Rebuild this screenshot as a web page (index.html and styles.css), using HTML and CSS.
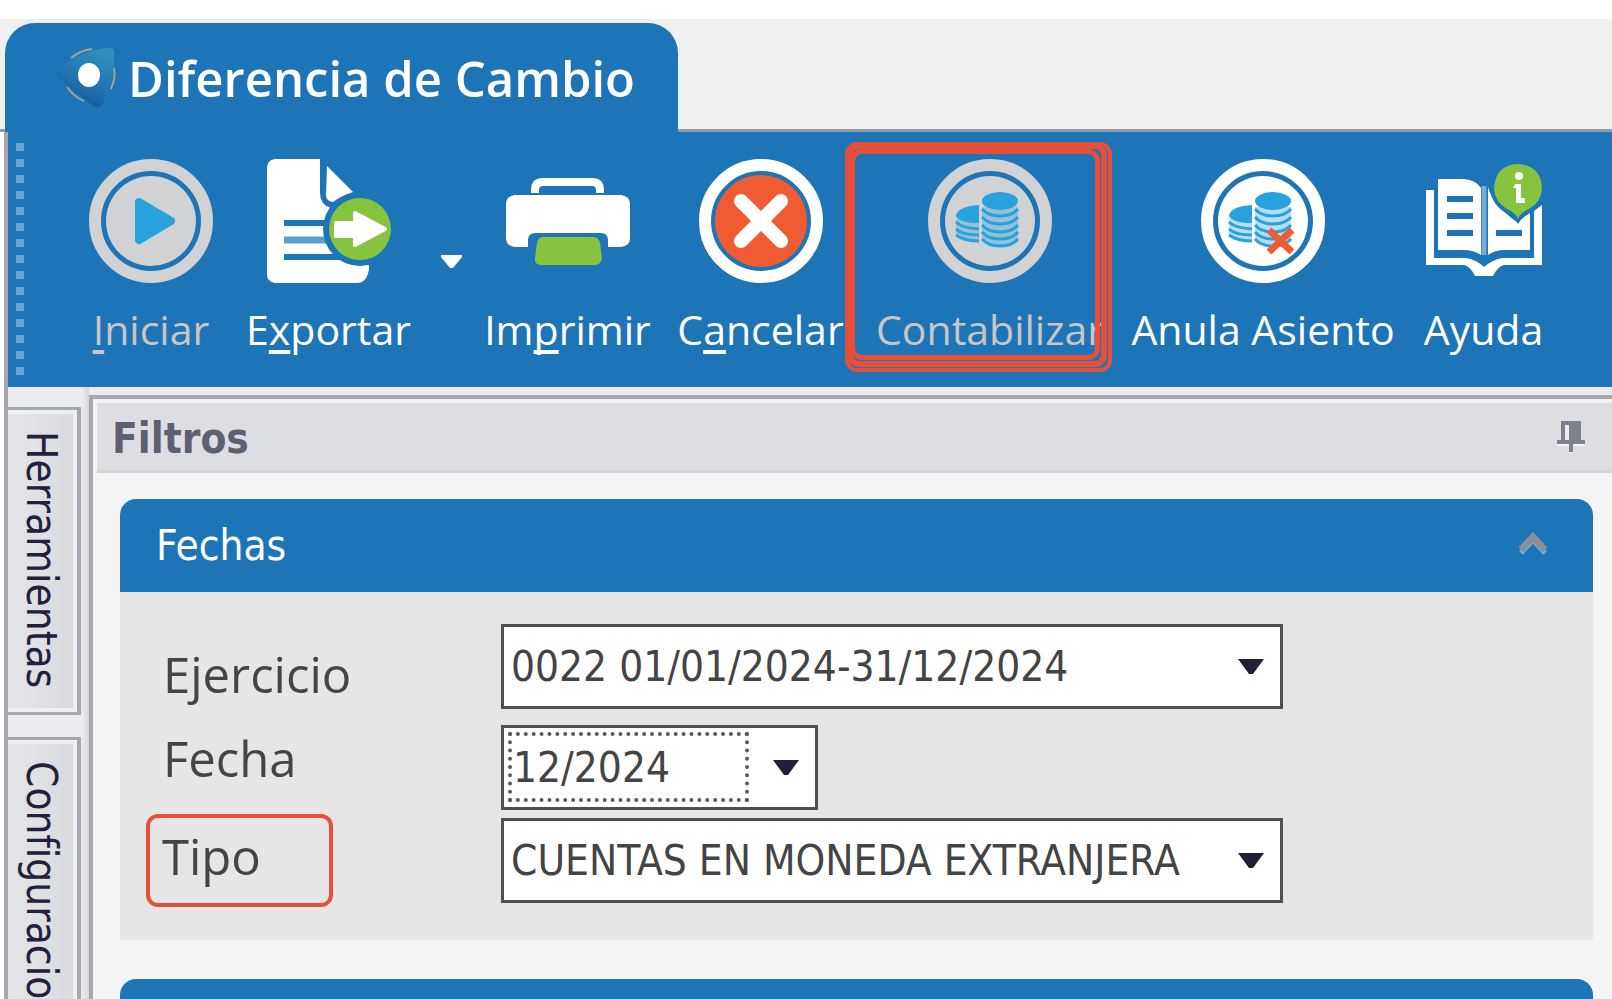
FILE: index.html
```html
<!DOCTYPE html>
<html lang="es">
<head>
<meta charset="utf-8">
<title>Diferencia de Cambio</title>
<link rel="stylesheet" href="styles.css">
</head>
<body>
<div class="window">
  <header class="tabstrip">
    <h1 class="doc-tab">
      <svg class="logo" viewBox="0 0 62 62" aria-hidden="true">
        <defs><linearGradient id="lg" x1="0.8" y1="0" x2="0.4" y2="1"><stop offset="0" stop-color="#3193bd"/><stop offset="0.5" stop-color="#2479b4"/><stop offset="1" stop-color="#125b9a"/></linearGradient></defs>
        <path d="M3 22Q-1 27 3 32L37 59Q44 63 47 56Q60 30 58 5Q57 0 50 1Q22 5 3 22Z" fill="url(#lg)"/>
        <path d="M15 11Q25 3 36 2M11 40Q18 50 28 54M58 21Q60 30 55 42" fill="none" stroke="#a5a19a" stroke-width="2"/>
        <ellipse cx="33" cy="28" rx="11" ry="12" fill="#fff"/>
      </svg>
      <span>Diferencia de Cambio</span>
    </h1>
  </header>

  <div class="frame">
    <nav class="toolbar" aria-label="Acciones">
      <span class="grip"></span>
      <button class="tool w-iniciar" disabled>
        <svg class="icon" viewBox="0 0 124 124" aria-hidden="true">
          <circle cx="62" cy="62" r="56" fill="none" stroke="#d1d2d4" stroke-width="12"/>
          <circle cx="62" cy="62" r="45" fill="#d1d2d4"/>
          <path d="M50 43L82 62L50 81Z" fill="#27a2dc" stroke="#27a2dc" stroke-width="8" stroke-linejoin="round"/>
        </svg>
        <span><u>I</u>niciar</span>
      </button>
      <button class="tool w-exportar">
        <svg class="icon" viewBox="0 0 124 124" aria-hidden="true">
          <path d="M8 0H53V34Q53 46 64 49L102 56V110Q100 124 90 124H8Q0 123 0 115V9Q0 1 8 0Z" fill="#fff"/>
          <path d="M60 7L86 33Q74 37 66 43Q59 42 59 36Z" fill="#fff"/>
          <path d="M17 64H70M17 98H80" stroke="#1d75b8" stroke-width="6"/>
          <path d="M17 81H70" stroke="#5c9ccf" stroke-width="7"/>
          <circle cx="93" cy="70" r="37" fill="#1d75b8"/>
          <circle cx="93" cy="70" r="31" fill="#86c440"/>
          <path d="M69 64H88V54L118 70L88 86V77H69Z" fill="#fff" stroke="#fff" stroke-width="4" stroke-linejoin="round"/>
        </svg>
        <span>E<u>x</u>portar</span>
      </button>
      <button class="more" aria-label="Más opciones de exportación">
        <svg viewBox="0 0 21 13" aria-hidden="true"><path d="M0 0H21V2L12 13H9L0 2Z" fill="#fff"/></svg>
      </button>
      <button class="tool w-imprimir">
        <svg class="icon" viewBox="0 0 124 124" aria-hidden="true">
          <path d="M29 34V31Q29 23 37 23H86Q94 23 94 31V34" fill="none" stroke="#fff" stroke-width="8"/>
          <path d="M9 36H115Q124 37 124 45V79Q124 87 115 88H102V80Q101 74 95 74H29Q23 74 22 80V88H9Q0 87 0 79V45Q0 37 9 36Z" fill="#fff"/>
          <path d="M37 78H87Q93 78 94 84L96 99Q95 106 89 106H35Q28 105 29 99L31 84Q32 78 37 78Z" fill="#86c440"/>
        </svg>
        <span>Im<u>p</u>rimir</span>
      </button>
      <button class="tool w-cancelar">
        <svg class="icon" viewBox="0 0 124 124" aria-hidden="true">
          <circle cx="62" cy="62" r="56" fill="none" stroke="#fff" stroke-width="12"/>
          <circle cx="62" cy="62" r="46" fill="#f15b33"/>
          <path d="M42 42L82 82M82 42L42 82" stroke="#fff" stroke-width="14" stroke-linecap="round"/>
        </svg>
        <span>C<u>a</u>ncelar</span>
      </button>
      <button class="tool w-contabilizar" disabled>
        <svg class="icon" viewBox="0 0 124 124" aria-hidden="true">
          <defs>
            <g id="coins">
              <path d="M54 48H90V80Q84 88 72 88Q60 88 54 80ZM28 60L51 62V83Q30 82 28 75Z" fill="#27a2dc" opacity="0.35"/>
              <ellipse cx="72" cy="42" rx="18" ry="9" fill="#27a2dc"/>
              <path d="M51 46V64H45Q28 62 28 56Q31 47 51 46Z" fill="#27a2dc"/>
              <g fill="none" stroke="#27a2dc" stroke-width="3">
                <path d="M54 50Q60 57 72 57Q84 57 90 50M54 58Q60 65 72 65Q84 65 90 58M54 66Q60 73 72 73Q84 73 90 66M54 73Q60 80 72 80Q84 80 90 73M54 80Q60 87 72 87Q84 87 90 80"/>
                <path d="M28 63Q34 69 51 70M28 70Q34 76 51 76M28 76Q36 82 51 82"/>
              </g>
            </g>
          </defs>
          <circle cx="62" cy="62" r="56" fill="none" stroke="#d1d2d4" stroke-width="12"/>
          <circle cx="62" cy="62" r="45" fill="#d1d2d4"/>
          <use href="#coins"/>
        </svg>
        <span>Contabilizar</span>
        <i class="mark mark-outer"></i><i class="mark mark-middle"></i><i class="mark mark-inner"></i>
      </button>
      <button class="tool w-anula">
        <svg class="icon" viewBox="0 0 124 124" aria-hidden="true">
          <circle cx="62" cy="62" r="56" fill="none" stroke="#fff" stroke-width="12"/>
          <circle cx="62" cy="62" r="45" fill="#fff"/>
          <use href="#coins"/>
          <path d="M68 71L91 93M91 71L68 93" stroke="#f15b33" stroke-width="7"/>
        </svg>
        <span>Anula Asiento</span>
      </button>
      <button class="tool w-ayuda">
        <svg class="icon" viewBox="0 0 124 124" aria-hidden="true">
          <path d="M4 31H12V99H44Q55 101 62 108Q70 101 80 99H112V52L120 46V106H82Q76 107 71 117H53Q48 107 42 106H4Z" fill="#fff"/>
          <path d="M16 20H42Q54 21 59 29V96Q51 91 42 91H16Z" fill="#fff"/>
          <path d="M66 28Q70 45 96 64Q100 56 108 52V91H82Q73 91 66 96Z" fill="#fff"/>
          <path d="M62 27V96" stroke="#78add9" stroke-width="5"/>
          <path d="M25 40H51M25 57H51M25 74H51M74 74H100" stroke="#1d75b8" stroke-width="6"/>
          <path d="M96 65Q93 58 84 54Q70 46 68 30L96 5L122 30Q122 44 110 53Q100 58 96 65Z" fill="#1d75b8"/>
          <path d="M96 60Q94 54 85 50Q73 43 72 30Q73 6 96 5Q119 6 120 30Q119 43 107 50Q98 54 96 60Z" fill="#86c440"/>
          <circle cx="97" cy="17" r="4" fill="#fff"/>
          <path d="M93 25H99V39H103V44H94V29H91Z" fill="#fff"/>
        </svg>
        <span>Ayuda</span>
      </button>
    </nav>

    <div class="workspace">
      <aside class="side-tabs">
        <button class="side-tab">Herramientas</button>
        <button class="side-tab">Configuracion</button>
      </aside>
      <main class="panel">
        <div class="panel-head">
          <h2>Filtros</h2>
          <button class="pin" aria-label="Fijar panel">
            <svg viewBox="0 0 28 34" aria-hidden="true">
              <path d="M4 2H24V21H28V25H16V32H12V25H0V21H4Z" fill="#f3f3f5"/>
              <path d="M4 0H24V19H28V23H16V31H12V23H0V19H4Z" fill="#80818f"/>
              <path d="M8 4H12V19H8Z" fill="#ececf0"/>
            </svg>
          </button>
        </div>
        <div class="groups">
          <section class="group">
            <div class="group-head">
              <h3>Fechas</h3>
              <button class="fold" aria-label="Contraer">
                <svg viewBox="0 0 28 24" aria-hidden="true"><path d="M2 21L14 8L26 21" fill="none" stroke="#6faed6" stroke-width="5"/><path d="M2 18L14 5L26 18" fill="none" stroke="#8c8e9a" stroke-width="7"/></svg>
              </button>
            </div>
            <form class="form">
              <div class="labels">
                <label for="ejercicio">Ejercicio</label>
                <label for="fecha">Fecha</label>
                <label for="tipo" class="marked">Tipo</label>
              </div>
              <div class="fields">
                <div class="combo">
                  <select id="ejercicio"><option>0022 01/01/2024-31/12/2024</option></select>
                  <svg class="arrow" viewBox="0 0 26 15" aria-hidden="true"><path d="M0 0H26L15 15H11Z" fill="#201f35"/></svg>
                </div>
                <div class="combo combo-short">
                  <select id="fecha"><option>12/2024</option></select>
                  <i class="focus"></i>
                  <svg class="arrow" viewBox="0 0 26 15" aria-hidden="true"><path d="M0 0H26L15 15H11Z" fill="#201f35"/></svg>
                </div>
                <div class="combo">
                  <select id="tipo"><option>CUENTAS EN MONEDA EXTRANJERA</option></select>
                  <svg class="arrow" viewBox="0 0 26 15" aria-hidden="true"><path d="M0 0H26L15 15H11Z" fill="#201f35"/></svg>
                </div>
              </div>
            </form>
          </section>
          <section class="group"><div class="group-head"></div></section>
        </div>
      </main>
    </div>
  </div>
</div>
</body>
</html>
```

FILE: styles.css
```css
:root {
  --blue: #1d75b8;
  --mark: #e6503b;
  --edge: #a6a7b1;
  --ui: "DejaVu Sans Condensed", "DejaVu Sans", sans-serif;
  --caption: "Open Sans", "Noto Sans", sans-serif;
}

* { box-sizing: border-box; }

body { margin: 0; background: #fff; font-family: var(--ui); font-size: 42px; }

button {
  margin: 0;
  padding: 0;
  border: 0;
  background: none;
  color: inherit;
  font: inherit;
}

h1, h2, h3 { margin: 0; font-size: inherit; font-weight: inherit; }

svg { display: block; }

.window {
  display: flex;
  flex-direction: column;
  height: 100vh;
  padding-top: 19px;
  overflow: hidden;
}

.tabstrip {
  flex: none;
  display: flex;
  padding: 4px 0 0 5px;
  background: linear-gradient(#8e9bab, #8e9bab) bottom / 100% 3px no-repeat #f0f0f0;
}

.doc-tab {
  display: flex;
  align-items: center;
  gap: 10px;
  width: 673px;
  height: 109px;
  padding: 0 0 0 51px;
  border-radius: 30px 30px 0 0;
  background: var(--blue);
  color: #fff;
  font: 600 49px/60px var(--caption);
  white-space: nowrap;
}

.logo { width: 62px; height: 62px; }

.frame {
  flex: 1;
  min-height: 0;
  display: flex;
  flex-direction: column;
  margin-left: 4px;
  border-left: 4px solid var(--edge);
}

.toolbar {
  flex: none;
  display: flex;
  gap: 29px;
  height: 255px;
  padding: 11px 16px 12px 8px;
  background: var(--blue);
  color: #fff;
}

.grip {
  width: 8px;
  margin-right: 36px;
  background: repeating-linear-gradient(#69a6d7 0 8px, transparent 8px 16px);
}

.tool {
  position: relative;
  flex: none;
  display: flex;
  flex-direction: column;
  align-items: center;
  gap: 18px;
  padding-top: 16px;
  font: 41px/56px var(--caption);
  white-space: nowrap;
}

.tool:disabled { color: #c9c6c4; }

.tool u {
  text-decoration-thickness: 4px;
  text-underline-offset: 5px;
  text-decoration-skip-ink: none;
}

.icon { width: 124px; height: 124px; }

.w-iniciar { width: 124px; }
.w-exportar { width: 173px; }
.w-imprimir { width: 159px; }
.w-cancelar { width: 169px; }
.w-contabilizar { width: 232px; }
.w-anula { width: 256px; }
.w-ayuda { width: 127px; }

.more { width: 21px; margin: 0 -3px; padding-top: 112px; align-self: flex-start; }
.more svg { width: 21px; height: 13px; }

.mark { position: absolute; border: 4px solid var(--mark); border-radius: 12px; }
.mark-outer { left: -29px; top: -1px; width: 267px; height: 230px; }
.mark-middle { left: -27px; top: 0; width: 260px; height: 224px; border-width: 6px; }
.mark-inner { left: -24px; top: 6px; width: 250px; height: 211px; border-width: 5px; }

.workspace { flex: 1; min-height: 0; display: flex; background: #eaebef; }

.side-tabs {
  flex: none;
  display: flex;
  flex-direction: column;
  gap: 22px;
  width: 81px;
  padding: 20px 8px 0 0;
  background: linear-gradient(90deg, #eaebef 74px, #d6d7dc);
}

.side-tab {
  flex: none;
  width: 73px;
  padding: 21px 4px 24px 0;
  border: solid var(--edge);
  border-width: 3px 4px 3px 0;
  background: linear-gradient(90deg, #e5e6ea, #d8d9dd);
  box-shadow: inset -4px 4px 0 #eff0f2, inset 0 -4px 0 #eff0f2;
  color: #22203a;
  line-height: 56px;
  text-align: start;
  writing-mode: vertical-rl;
}

.panel {
  flex: 1;
  min-width: 0;
  margin-top: 8px;
  border: solid var(--edge);
  border-width: 4px 0 0 4px;
  background: #f4f4f4;
}

.panel-head {
  display: flex;
  align-items: center;
  justify-content: space-between;
  height: 70px;
  margin: 4px 0 0 4px;
  padding: 3px 27px 0 15px;
  border-bottom: 3px solid #d3d4da;
  background: #dddee2;
  color: #5e5f70;
  font-weight: bold;
}

.pin svg { width: 28px; height: 34px; }

.groups { display: flex; flex-direction: column; gap: 39px; padding: 26px 19px 0 27px; }

.group-head {
  display: flex;
  align-items: center;
  justify-content: space-between;
  height: 93px;
  padding: 0 46px 0 36px;
  border-radius: 16px 16px 0 0;
  background: var(--blue);
  color: #fff;
}

.fold { padding-bottom: 4px; }
.fold svg { width: 28px; height: 24px; }

.form { display: flex; padding: 32px 43px 33px; background: #e6e6e6; }

.labels {
  flex: none;
  display: flex;
  flex-direction: column;
  align-items: flex-start;
  gap: 28px;
  width: 338px;
  padding-top: 22px;
  color: #454545;
  font: 49px/56px var(--caption);
}

.labels .marked {
  width: 187px;
  margin-left: -17px;
  padding: 10px 12px 19px;
  border: 4px solid var(--mark);
  border-radius: 12px;
}

.fields { flex: 1; display: flex; flex-direction: column; gap: 8px; max-width: 782px; }

.combo { position: relative; height: 85px; }
.combo-short { width: 317px; margin-top: 8px; }

.combo select {
  width: 100%;
  height: 100%;
  padding: 0 70px 0 7px;
  border: 3px solid #505050;
  border-radius: 0;
  outline: 0;
  appearance: none;
  background: #fff;
  color: #444;
  font: 42px var(--ui);
}

.combo-short select { padding-left: 9px; }

.arrow { position: absolute; right: 19px; top: 35px; width: 26px; height: 15px; pointer-events: none; }

.focus {
  position: absolute;
  left: 7px;
  top: 7px;
  width: 241px;
  height: 70px;
  border: 4px dotted #5a5a5a;
  pointer-events: none;
}
```
